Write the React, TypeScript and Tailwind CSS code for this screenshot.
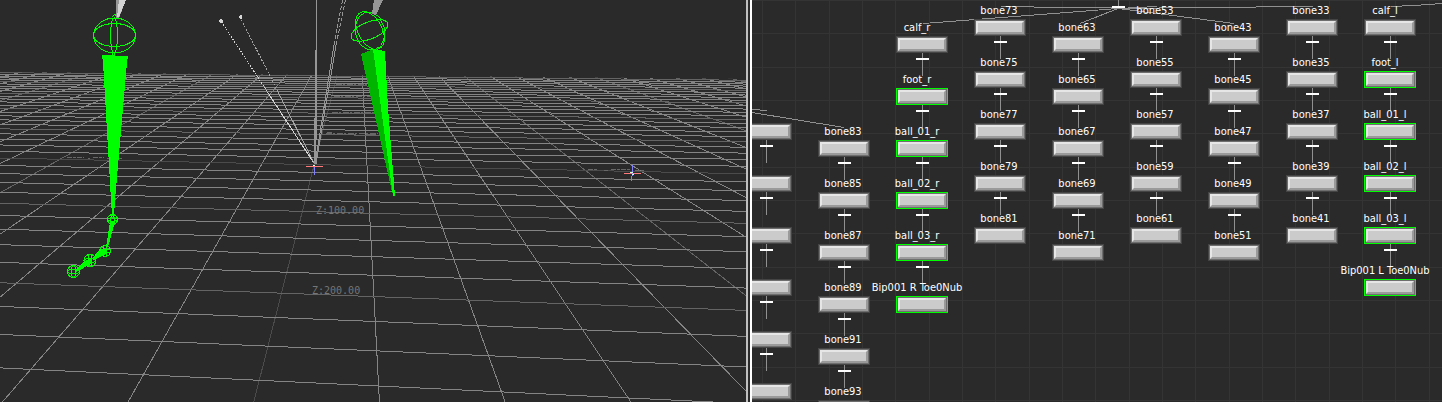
import React from "react";

type Column = {
  x: number;
  y: number;
  limb?: boolean;
  selectedFrom?: number;
  names: string[];
};

const COLUMNS: Column[] = [
  { x: -11, y: 108, names: ["", "", "", "", "", ""] },
  { x: 67, y: 125, names: ["bone83", "bone85", "bone87", "bone89", "bone91", "bone93"] },
  {
    x: 145,
    y: 21,
    limb: true,
    selectedFrom: 1,
    names: ["calf_r", "foot_r", "ball_01_r", "ball_02_r", "ball_03_r", "Bip001 R Toe0Nub"],
  },
  { x: 223, y: 4, names: ["bone73", "bone75", "bone77", "bone79", "bone81"] },
  { x: 301, y: 21, names: ["bone63", "bone65", "bone67", "bone69", "bone71"] },
  { x: 379, y: 4, names: ["bone53", "bone55", "bone57", "bone59", "bone61"] },
  { x: 457, y: 21, names: ["bone43", "bone45", "bone47", "bone49", "bone51"] },
  { x: 535, y: 4, names: ["bone33", "bone35", "bone37", "bone39", "bone41"] },
  {
    x: 613,
    y: 4,
    limb: true,
    selectedFrom: 1,
    names: ["calf_l", "foot_l", "ball_01_l", "ball_02_l", "ball_03_l", "Bip001 L Toe0Nub"],
  },
];

/* Rows of the ground plane, numbered from the far edge; every fifth is dimmer. */
const ROWS = Array.from({ length: 40 }, (_, i) => i - 30);
const RAYS = Array.from({ length: 51 }, (_, i) => i - 25);

function gridColor(n: number) {
  if (n === 0) return "#4b4b4b";
  return n % 5 === 0 ? "#646464" : "#848484";
}

function GroundGrid() {
  return (
    <g clipPath="url(#ground)" shapeRendering="crispEdges">
      {RAYS.map((k) => (
        <line key={k} x1={358} y1={-7} x2={358 + (k * 125.4 - 104) * 1.2} y2={482.6} stroke={gridColor(k)} />
      ))}
      {ROWS.map((n) => (
        <line
          key={n}
          x1={0}
          y1={-6.5 + 3815 / (18.19 - n)}
          x2={746}
          y2={-6.5 + 4183 / (18.2 - n)}
          stroke={gridColor(n + 5)}
        />
      ))}
    </g>
  );
}

function Joint({ x, y, r }: { x: number; y: number; r: number }) {
  return (
    <g fill="none" stroke="#00ff00">
      <circle cx={x} cy={y} r={r} />
      <ellipse cx={x} cy={y} rx={r} ry={r / 3} />
      <ellipse cx={x} cy={y} rx={r / 3} ry={r} />
    </g>
  );
}

function Viewport() {
  return (
    <svg
      role="img"
      aria-label="Perspective view"
      viewBox="0 0 746 402"
      preserveAspectRatio="xMinYMin slice"
      className="block h-full w-full"
    >
      <defs>
        <clipPath id="ground">
          <path d="M0 72L746 79V402H0Z" />
        </clipPath>
      </defs>
      <GroundGrid />

      <g fill="#767676" className="font-['DejaVu_Sans_Mono',monospace] text-[10px]">
        <text x="316" y="214">Z:100.00</text>
        <text x="312" y="294">Z:200.00</text>
      </g>
      <g stroke="#686868" fill="none" shapeRendering="crispEdges">
        <path d="M67 157.500H84M88 158.500H90M93 157.500H104M107 158.500H122" strokeDasharray="5 1 3 1" />
        <path d="M588 169.500H598M604 170.500H608M611 169.500H630M635 170.500H645" strokeDasharray="5 1 3 1" />
        <path d="M326 133.500H378M332 112.500H375M334 96.500H372M336 84.500H370" strokeDasharray="6 1 2 2" />
        <path d="M327 132.500H332M345 134.500H356M366 134.500H376" />
      </g>

      <g shapeRendering="crispEdges" fill="none">
        <path d="M314.500 164L221 21" stroke="#d6d6d6" strokeDasharray="1.700 1.200" />
        <path d="M314.500 164L270 96" stroke="#d6d6d6" />
        <path d="M314.500 164L240 17" stroke="#a5a5a5" strokeDasharray="1.700 1.700" />
        <path d="M314.500 164L277 90" stroke="#a5a5a5" />
        <path d="M316.500 0V50M315.500 50V164M316.500 50V140M314.500 118V164" stroke="#969696" />
        <path d="M342.500 0L334 45M345.500 0L336 45" stroke="#969696" strokeDasharray="4 2" />
        <path d="M334 45L315 164M336 45L316 164" stroke="#969696" />
        <path d="M219 21H223M221 19V23M239 17H242M240.500 15V19" stroke="#d6d6d6" strokeWidth="2" />
      </g>

      <g shapeRendering="crispEdges">
        <path d="M306 166.500H323M624 173.500H641" stroke="#ff7b7b" />
        <path d="M314.500 167V175M632.500 165V176M631.500 176V181" stroke="#8080ff" />
        <path d="M313 165.500H315M630 172.500H633M632 174.500H634" stroke="#d8ffd8" />
      </g>

      <g fill="none" stroke="#00ff00" shapeRendering="crispEdges">
        <ellipse cx="114.500" cy="35.500" rx="21" ry="17.500" />
        <ellipse cx="114.500" cy="35" rx="21" ry="11.500" />
        <ellipse cx="114" cy="35.500" rx="3.500" ry="17.500" />
        <path d="M112 17L115 14L118 18M112.500 52V56M114.500 52V56" />
        <ellipse cx="370" cy="31" rx="14.500" ry="19" transform="rotate(-10 370 31)" />
        <ellipse cx="370" cy="30.500" rx="12" ry="20.500" transform="rotate(-28 370 30.500)" />
        <ellipse cx="369.500" cy="30.500" rx="19.500" ry="8.500" transform="rotate(-22 369.500 30.500)" />
      </g>
      <g shapeRendering="crispEdges">
        <path d="M116 0H126L119 18H116Z" fill="#969696" />
        <path d="M119 0H126L119 17H117Z" fill="#d2d2d2" />
        <path d="M374 0H383L376 15L372 14Z" fill="#969696" />
        <path d="M102 55L128 56L127 62L115 200L114 216H112L111 200L103 62Z" fill="#00ff00" />
        <path d="M361 54L374 49L384 51L394 196L392 192Z" fill="#00b400" />
        <path d="M373 49L385 51L388 108L395 196H393Z" fill="#00ff00" />
        <path d="M110 222H115L108 247H106Z" fill="#00ff00" />
        <path d="M106 249L98 251L92 259L94 260L106 254Z" fill="#00ff00" />
        <path d="M91 259L84 261L75 270L76 272L91 264Z" fill="#00ff00" />
        <Joint x={112.5} y={219.5} r={5} />
        <Joint x={105} y={251} r={5.5} />
        <Joint x={90} y={260.5} r={6} />
        <Joint x={73.5} y={271.5} r={6} />
      </g>
    </svg>
  );
}

function Wires() {
  return (
    <svg aria-hidden="true" className="absolute inset-0 h-full w-full" shapeRendering="crispEdges">
      <defs>
        <pattern id="cells" x="10" y="0" width="100" height="100" patternUnits="userSpaceOnUse">
          <path d="M0.500 0V100M33.500 0V100M67.500 0V100M0 0.500H100M0 33.500H100M0 67.500H100" stroke="#343434" />
        </pattern>
      </defs>
      <rect width="100%" height="100%" fill="url(#cells)" />
      <g stroke="#909090" fill="none">
        <path d="M366.500 0V7M366 7.500L315 7.500L249 6.500M366 8.500L224 19.500L171 23.500M366 8.500L328 23.500" />
        <path d="M366 8.500L405 6.500M366 8.500L444 18.500L482 23.500M366 8.500L448 7.500L561 6.500M639 6.500L662 5.500L690 3.500" />
        <path d="M0 109.500L15 110.500M0 112.500L92 127.500" />
      </g>
      <path d="M360 7H373" stroke="#ffffff" strokeWidth="2" />
    </svg>
  );
}

function BoneNode({
  name,
  limb,
  selected,
  linked,
}: {
  name: string;
  limb?: boolean;
  selected: boolean;
  linked: boolean;
}) {
  return (
    <li className="flex h-[52px] flex-col items-center">
      <button type="button" aria-label={name || "bone"} className="flex w-[50px] shrink-0 flex-col">
        <span
          className={
            "flex h-[16px] w-full justify-center whitespace-nowrap text-[11px] leading-[13px] text-white " +
            (limb ? "pr-[10px]" : "pr-[2px]")
          }
        >
          {name}
        </span>
        <span
          className={
            "block h-[15px] w-full border border-[#6e6e6e] bg-[#cbcbcb] outline-1 outline-solid " +
            (selected ? "outline-[#00ff00]" : "outline-[#444444]")
          }
        >
          <span className="block h-full w-full border-2 border-t-[#e6e6e6] border-r-[#9a9a9a] border-b-[#9a9a9a] border-l-[#e6e6e6]" />
        </span>
      </button>
      {linked && (
        <span className="flex h-[24px] w-[13px] shrink-0 flex-col items-center">
          <span className="mt-px h-[5px] w-px bg-[#909090]" />
          <span className="h-[2px] w-full shrink-0 bg-white" />
          <span className="h-[16px] w-px bg-[#909090]" />
        </span>
      )}
    </li>
  );
}

export default function App() {
  return (
    <main className="grid h-screen grid-cols-[746fr_6px_690fr] overflow-hidden bg-[#2a2a2a] font-['DejaVu_Sans_Condensed','Noto_Sans',sans-serif]">
      <section className="min-w-0 overflow-hidden">
        <Viewport />
      </section>
      <div role="separator" className="border-l-2 border-r-2 border-l-[#c0c0c0] border-r-white" />
      <section aria-label="Schematic" className="relative min-w-0 overflow-hidden">
        <Wires />
        {COLUMNS.map((c) => (
          <ul key={c.x} className="absolute w-[50px]" style={{ left: c.x, top: c.y }}>
            {c.names.map((name, i) => (
              <BoneNode
                key={i}
                name={name}
                limb={c.limb}
                selected={c.selectedFrom !== undefined && i >= c.selectedFrom}
                linked={i < c.names.length - 1}
              />
            ))}
          </ul>
        ))}
      </section>
    </main>
  );
}
